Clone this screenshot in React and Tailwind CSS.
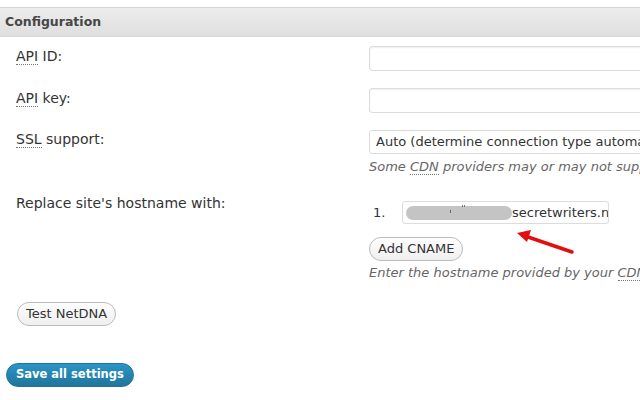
import React from "react";

const font = { fontFamily: '"DejaVu Sans", Verdana, sans-serif' };

function Abbr({ children }) {
  return (
    <span className="border-b border-dotted border-[#777] leading-none">{children}</span>
  );
}

function Input() {
  return (
    <div className="h-[25px] w-[300px] shrink-0 rounded-[3px] border border-[#dcdcdc] bg-white shadow-[inset_0_1px_2px_rgba(0,0,0,0.07)]" />
  );
}

function Btn({ children }) {
  return (
    <div className="inline-flex h-[24px] items-center rounded-full border border-[#bbbbbb] bg-gradient-to-b from-[#fefefe] to-[#efefef] px-[8px] text-[13px] text-[#333]">
      {children}
    </div>
  );
}

function Label({ children, className = "" }) {
  return (
    <div className={"w-[369px] shrink-0 pl-[16px] text-[14px] leading-[16px] " + className}>
      {children}
    </div>
  );
}

export default function App() {
  return (
    <div
      className="relative h-[400px] w-[640px] overflow-hidden bg-white text-[13px] text-[#333]"
      style={font}
    >
      {/* header */}
      <div className="mt-[7px] flex h-[30px] items-center border-y border-[#d6d6d6] bg-gradient-to-b from-[#ededed] to-[#dfdfdf] pl-[5px]">
        <span className="text-[12.5px] font-bold text-[#464646]">Configuration</span>
      </div>

      <div className="flex flex-col pt-[9px]">
        {/* API ID */}
        <div className="flex h-[25px] items-start">
          <Label className="pt-[2px]">
            <Abbr>API</Abbr> ID:
          </Label>
          <Input />
        </div>
        {/* API key */}
        <div className="mt-[17px] flex h-[25px] items-start">
          <Label className="pt-[2px]">
            <Abbr>API</Abbr> key:
          </Label>
          <Input />
        </div>
        {/* SSL */}
        <div className="mt-[17px] flex items-start">
          <Label className="pt-[1px]">
            <Abbr>SSL</Abbr> support:
          </Label>
          <div className="flex shrink-0 flex-col">
            <div className="flex h-[24px] w-[300px] items-center overflow-hidden whitespace-nowrap rounded-[3px] border border-[#dcdcdc] bg-white pl-[6px] text-[13px] text-[#333]">
              Auto (determine connection type automatically)
            </div>
            <div className="mt-[5px] whitespace-nowrap text-[13px] italic leading-[16px] text-[#666]">
              Some <Abbr>CDN</Abbr> providers may or may not support SSL
            </div>
          </div>
        </div>
        {/* CNAME */}
        <div className="mt-[26px] flex items-start">
          <Label className="-mt-[6px]">Replace site's hostname with:</Label>
          <div className="flex shrink-0 flex-col">
            <div className="flex items-center">
              <span className="w-[33px] shrink-0 pl-[4px]">1.</span>
              <div className="flex h-[23px] w-[207px] shrink-0 items-center overflow-hidden whitespace-nowrap rounded-[3px] border border-[#dcdcdc] bg-white pl-[3px]">
                <span className="relative h-[14px] w-[106px] shrink-0 rounded-full bg-[#c4c4c4]">
                  <span className="absolute left-[44px] top-[4px] h-[3px] w-[1px] bg-[#666]" />
                  <span className="absolute left-[56px] top-[-1px] h-[2px] w-[1px] bg-[#777]" />
                  <span className="absolute left-[58px] top-[-1px] h-[2px] w-[1px] bg-[#777]" />
                </span>
                <span className="text-[13px] text-[#333]">secretwriters.net</span>
              </div>
            </div>
            <div className="mt-[13px]">
              <Btn>Add CNAME</Btn>
            </div>
            <div className="mt-[4px] whitespace-nowrap text-[13px] italic leading-[16px] text-[#666]">
              Enter the hostname provided by your <Abbr>CDN</Abbr> provider
            </div>
          </div>
        </div>
        {/* Test */}
        <div className="mt-[21px] pl-[17px]">
          <Btn>Test NetDNA</Btn>
        </div>
        {/* Save */}
        <div className="mt-[37px] pl-[6px]">
          <div className="inline-flex h-[24px] items-center rounded-full border border-[#21759b] bg-gradient-to-b from-[#2a95c5] to-[#21759b] px-[9px] text-[11.5px] font-bold text-white">
            Save all settings
          </div>
        </div>
      </div>

      {/* red arrow annotation */}
      <svg
        className="absolute left-0 top-0"
        width="640"
        height="400"
        viewBox="0 0 640 400"
      >
        <line x1="572" y1="252" x2="528" y2="237" stroke="#e01010" strokeWidth="3.5" strokeLinecap="round" />
        <polygon points="517,233 531,230 527,242" fill="#e01010" />
      </svg>
    </div>
  );
}
